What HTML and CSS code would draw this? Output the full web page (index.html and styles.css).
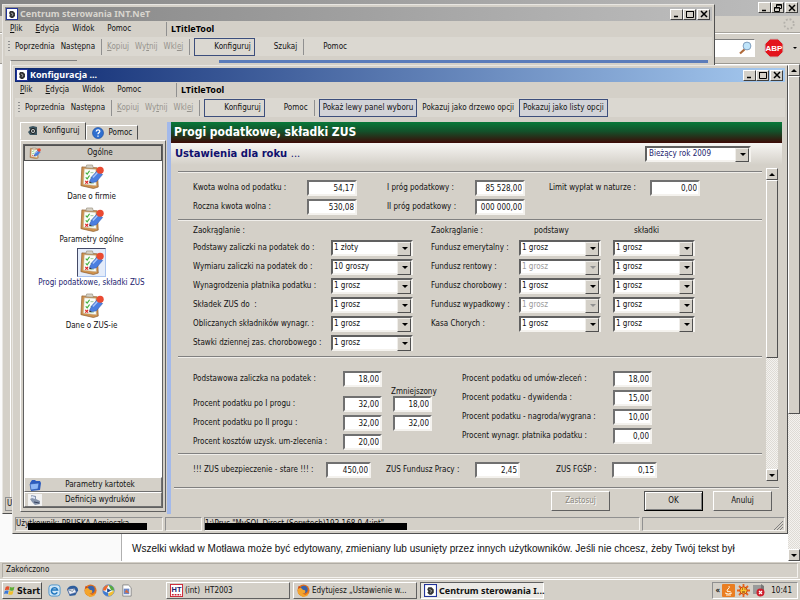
FILE: index.html
```
<!DOCTYPE html>
<html lang="pl">
<head>
    <meta charset="UTF-8">
    <meta name="viewport" content="width=device-width, initial-scale=1.0">
    <title>Konfiguracja ...</title>
    <link rel="stylesheet" href="styles.css">
</head>
<body>

<!-- Ikony -->
<svg class="sprite" width="0" height="0">
    <symbol id="ico-app" viewBox="0 0 12 12">
        <rect x=".5" y=".5" width="11" height="11" fill="#fff" stroke="#22339a"/>
        <path d="M4 3h3l2 2v3L7 10H5L3 8l1-1-1-2z" fill="#333"/>
        <path d="M5 5l2 1-1 2" stroke="#bbb" fill="none" stroke-width=".8"/>
    </symbol>
    <symbol id="ico-clip" viewBox="0 0 26 26">
        <path d="M3 3l16 1 1 20-5 1.500-13-3z" fill="#cf9350" stroke="#8a5a2a" stroke-width=".7"/>
        <path d="M5.500 5l12 .5.5 17L4.500 21z" fill="#fafdf8" stroke="#b9a98c" stroke-width=".5"/>
        <path d="M7 4l1-3h6l1 3.500z" fill="#d7d2c6" stroke="#8d8571" stroke-width=".6"/>
        <path d="M7 9l1.500 1.500L11 7M7 14l1.500 1.500L11 12" stroke="#3fae3a" fill="none" stroke-width="1.200"/>
        <path d="M6.500 17.500l3 3m0-3l-3 3" stroke="#d22" stroke-width="1.200"/>
        <path d="M12 9h3M12 14h2M11.500 20h4" stroke="#9bc79a"/>
        <path d="M11 18l2.500-5 6-6.500 5 4.500-6.500 7.500-5 1z" fill="#4b7fe0" stroke="#2c57b4" stroke-width=".6"/>
        <path d="M14.500 14l5.500-6" stroke="#a9c6fa" stroke-width="1.500"/>
        <circle cx="22" cy="6.500" r="3.700" fill="#ea4a32"/>
        <path d="M10.500 20l.5-2 2.500 1.500z" fill="#333"/>
    </symbol>
    <symbol id="ico-gear" viewBox="0 0 12 12">
        <path d="M2 2l4-1 4 1v8H3l-2-3 2-2z" fill="#3c5560"/>
        <circle cx="6" cy="6" r="2.500" fill="#cfd8da" stroke="#111"/>
        <circle cx="6" cy="6" r="1" fill="#222"/>
    </symbol>
    <symbol id="ico-help" viewBox="0 0 12 12">
        <circle cx="6" cy="6" r="5.500" fill="#2f6fd0" stroke="#174a9c" stroke-width=".6"/>
        <path d="M4.200 4.500C4.300 2.200 8 2.300 7.800 4.500 7.700 5.700 6 5.600 6 7.300M6 8.500v1.300" stroke="#fff" stroke-width="1.300" fill="none"/>
    </symbol>
    <symbol id="ico-folder" viewBox="0 0 14 12">
        <path d="M2 4l2-3h3l1 1h4l1 2-1 7-9 1z" fill="#2c5cc0"/>
        <path d="M2 5l9-1-1 6-7 1z" fill="#8db6f5" stroke="#2450aa" stroke-width=".6"/>
    </symbol>
    <symbol id="ico-print" viewBox="0 0 14 12">
        <rect width="14" height="12" fill="#f2f2f2"/>
        <path d="M3 1l5 1v3l4 2v3l-5 1-3-3-2-3 2-1z" fill="#8795ad"/>
        <path d="M4 2l3 1v2l-3-1z" fill="#dfe8fa"/>
        <path d="M6 8l5 1" stroke="#34405c"/>
    </symbol>
    <symbol id="ico-min" viewBox="0 0 8 8"><path d="M1 6.500h4" stroke="#000" stroke-width="1.500"/></symbol>
    <symbol id="ico-max" viewBox="0 0 8 8"><path d="M.5 1.500h7M.5 1v6.500h7V1" stroke="#000" fill="none"/></symbol>
    <symbol id="ico-restore" viewBox="0 0 8 8"><path d="M2.500 3V.5h5v4H6M.5 3.500h5v4h-5zM2 1.200h6M0 4h6" stroke="#000" fill="none"/></symbol>
    <symbol id="ico-close" viewBox="0 0 8 8"><path d="M1 1l6 6M7 1L1 7" stroke="#000" stroke-width="1.500"/></symbol>
    <symbol id="ico-firefox" viewBox="0 0 14 14">
        <circle cx="7" cy="7" r="6.500" fill="#e2701c"/>
        <circle cx="7.500" cy="6" r="4" fill="#3a62a8"/>
        <path d="M1 5c2-2 4-1 5 1 1 1 3 0 3 2s-3 3-5 1l5 3 4-3-2 4-5 1-5-4z" fill="#f4a52c"/>
        <path d="M1 5l1-3 2 2z" fill="#c8481a"/>
    </symbol>
</svg>

<!-- Okno przegladarki w tle -->
<div class="browser">
    <div class="browser-title">
        <div class="controls">
            <button type="button" aria-label="Minimalizuj"><svg><use href="#ico-min"/></svg></button>
            <button type="button" aria-label="Przywróć"><svg><use href="#ico-restore"/></svg></button>
            <button type="button" class="close" aria-label="Zamknij"><svg><use href="#ico-close"/></svg></button>
        </div>
    </div>
    <div class="browser-menu">
        <svg class="throbber" viewBox="0 0 12 12"><circle cx="6" cy="6" r="4.800" fill="none" stroke="#b4b1ab" stroke-width="1.800" stroke-dasharray="1.900 1.870"/></svg>
    </div>
    <div class="browser-nav">
        <div class="search">
            <input type="text" aria-label="Szukaj w sieci">
            <svg class="lens" viewBox="0 0 14 14"><path d="M2 12.500L7 8" stroke="#b06a3a" stroke-width="2.200"/><circle cx="9" cy="5" r="3.900" fill="#bfe4fa" stroke="#7e9dbd"/></svg>
        </div>
        <svg class="abp" viewBox="0 0 20 20"><path d="M6 1h8l5 5v8l-5 5H6l-5-5V6z" fill="#e3141c" stroke="#c9b8b4"/><text x="10" y="13" text-anchor="middle">ABP</text></svg>
        <svg class="dot" viewBox="0 0 4 4"><path d="M0 1h4L2 3z"/></svg>
    </div>
    <div class="browser-page">
        <div class="page-side"></div>
        <div class="page-text">
            <p>Wszelki wkład w Motława może być edytowany, zmieniany lub usunięty przez innych użytkowników. Jeśli nie chcesz, żeby Twój tekst był</p>
        </div>
        <div class="scrollbar page-scroll">
            <span class="arrow up"></span>
            <span class="thumb"></span>
            <span class="arrow down"></span>
        </div>
    </div>
    <div class="browser-status"><span>Zakończono</span></div>
</div>

<!-- Centrum sterowania -->
<div class="window window-back">
    <div class="titlebar inactive">
        <svg class="app-icon"><use href="#ico-app"/></svg>
        <span class="caption">Centrum sterowania INT.NeT</span>
        <div class="controls">
            <button type="button" aria-label="Minimalizuj"><svg><use href="#ico-min"/></svg></button>
            <button type="button" aria-label="Maksymalizuj"><svg><use href="#ico-max"/></svg></button>
            <button type="button" class="close" aria-label="Zamknij"><svg><use href="#ico-close"/></svg></button>
        </div>
    </div>
    <div class="menubar">
        <nav>
            <button type="button"><u>P</u>lik</button>
            <button type="button"><u>E</u>dycja</button>
            <button type="button">Widok</button>
            <button type="button">Pomoc</button>
        </nav>
        <b>LTitleTool</b>
    </div>
    <div class="toolbar">
        <i class="grip"></i>
        <button type="button">Poprzednia</button>
        <button type="button">Następna</button>
        <i class="sep"></i>
        <button type="button" disabled><u>K</u>opiuj</button>
        <button type="button" disabled>Wy<u>t</u>nij</button>
        <button type="button" disabled>Wkl<u>e</u>j</button>
        <i class="sep"></i>
        <button type="button" class="boxed icon-space">Konfiguruj</button>
        <button type="button" class="icon-gap">Szukaj</button>
        <i class="sep"></i>
        <button type="button" class="icon-gap">Pomoc</button>
    </div>
    <div class="back-body">
        <div class="back-left"></div>
        <div class="back-right"></div>
    </div>
    <div class="back-status">Użytkownik</div>
</div>

<!-- Konfiguracja -->
<div class="window window-config">
    <div class="titlebar">
        <svg class="app-icon"><use href="#ico-app"/></svg>
        <span class="caption">Konfiguracja ...</span>
        <div class="controls">
            <button type="button" aria-label="Minimalizuj"><svg><use href="#ico-min"/></svg></button>
            <button type="button" aria-label="Maksymalizuj"><svg><use href="#ico-max"/></svg></button>
            <button type="button" class="close" aria-label="Zamknij"><svg><use href="#ico-close"/></svg></button>
        </div>
    </div>
    <div class="menubar">
        <nav>
            <button type="button"><u>P</u>lik</button>
            <button type="button"><u>E</u>dycja</button>
            <button type="button">Widok</button>
            <button type="button">Pomoc</button>
        </nav>
        <b>LTitleTool</b>
    </div>
    <div class="toolbar">
        <i class="grip"></i>
        <button type="button">Poprzednia</button>
        <button type="button">Następna</button>
        <i class="sep"></i>
        <button type="button" disabled><u>K</u>opiuj</button>
        <button type="button" disabled>Wy<u>t</u>nij</button>
        <button type="button" disabled>Wkl<u>e</u>j</button>
        <i class="sep"></i>
        <button type="button" class="boxed icon-space">Konfiguruj</button>
        <button type="button" class="icon-gap">Pomoc</button>
        <i class="sep"></i>
        <button type="button" class="boxed">Pokaż lewy panel wyboru</button>
        <button type="button">Pokazuj jako drzewo opcji</button>
        <button type="button" class="boxed">Pokazuj jako listy opcji</button>
    </div>

    <div class="config-body">
        <aside class="side">
            <div class="tabs">
                <button type="button" class="tab active"><svg><use href="#ico-gear"/></svg>Konfiguruj</button>
                <button type="button" class="tab"><svg><use href="#ico-help"/></svg>Pomoc</button>
            </div>
            <div class="tab-page">
                <div class="outlook">
                    <button type="button" class="group first"><svg><use href="#ico-clip"/></svg><span>Ogólne</span></button>
                    <div class="items">
                        <button type="button" class="item"><svg><use href="#ico-clip"/></svg><span>Dane o firmie</span></button>
                        <button type="button" class="item"><svg><use href="#ico-clip"/></svg><span>Parametry ogólne</span></button>
                        <button type="button" class="item selected"><svg><use href="#ico-clip"/></svg><span>Progi podatkowe, składki ZUS</span></button>
                        <button type="button" class="item"><svg><use href="#ico-clip"/></svg><span>Dane o ZUS-ie</span></button>
                    </div>
                    <button type="button" class="group"><svg><use href="#ico-folder"/></svg><span>Parametry kartotek</span></button>
                    <button type="button" class="group"><svg><use href="#ico-print"/></svg><span>Definicja wydruków</span></button>
                </div>
            </div>
        </aside>
        <div class="splitter"></div>

        <main class="content">
            <h1>Progi podatkowe, składki ZUS</h1>
            <div class="year-bar">
                <h2>Ustawienia dla roku <span>...</span></h2>
                <div class="combo year"><select aria-label="Rok"><option>Bieżący rok 2009</option></select></div>
            </div>

            <div class="scroll-area">
                <form class="settings">
                    <section class="limits">
                        <label for="kwota">Kwota wolna od podatku :</label><input type="text" id="kwota" value="54,17">
                        <label for="prog1" class="second">I próg podatkowy :</label><input type="text" id="prog1" value="85 528,00">
                        <label for="limit" class="third">Limit wypłat w naturze :</label><input type="text" id="limit" value="0,00">
                        <label for="roczna">Roczna kwota wolna :</label><input type="text" id="roczna" value="530,08">
                        <label for="prog2" class="second">II próg podatkowy :</label><input type="text" id="prog2" value="000 000,00">
                    </section>

                    <section class="rounding">
                        <div class="round-left">
                            <span class="head">Zaokrąglanie :</span><span></span>
                            <label for="r1">Podstawy zaliczki na podatek do :</label>
                            <div class="combo"><select id="r1"><option>1 złoty</option></select></div>
                            <label for="r2">Wymiaru zaliczki na podatek do :</label>
                            <div class="combo"><select id="r2"><option>10 groszy</option></select></div>
                            <label for="r3">Wynagrodzenia płatnika podatku :</label>
                            <div class="combo"><select id="r3"><option>1 grosz</option></select></div>
                            <label for="r4">Składek ZUS do &nbsp;:</label>
                            <div class="combo"><select id="r4"><option>1 grosz</option></select></div>
                            <label for="r5">Obliczanych składników wynagr. :</label>
                            <div class="combo"><select id="r5"><option>1 grosz</option></select></div>
                            <label for="r6">Stawki dziennej zas. chorobowego :</label>
                            <div class="combo"><select id="r6"><option>1 grosz</option></select></div>
                        </div>
                        <div class="round-right">
                            <span class="head">Zaokrąglanie :</span><span class="head basis">podstawy</span><span class="head premium">składki</span>
                            <label for="f1">Fundusz emerytalny :</label>
                            <div class="combo"><select id="f1"><option>1 grosz</option></select></div>
                            <div class="combo"><select aria-label="Fundusz emerytalny, składki"><option>1 grosz</option></select></div>
                            <label for="f2">Fundusz rentowy :</label>
                            <div class="combo off"><select id="f2" disabled><option>1 grosz</option></select></div>
                            <div class="combo"><select aria-label="Fundusz rentowy, składki"><option>1 grosz</option></select></div>
                            <label for="f3">Fundusz chorobowy :</label>
                            <div class="combo"><select id="f3"><option>1 grosz</option></select></div>
                            <div class="combo"><select aria-label="Fundusz chorobowy, składki"><option>1 grosz</option></select></div>
                            <label for="f4">Fundusz wypadkowy :</label>
                            <div class="combo off"><select id="f4" disabled><option>1 grosz</option></select></div>
                            <div class="combo"><select aria-label="Fundusz wypadkowy, składki"><option>1 grosz</option></select></div>
                            <label for="f5">Kasa Chorych :</label>
                            <div class="combo"><select id="f5"><option>1 grosz</option></select></div>
                            <div class="combo"><select aria-label="Kasa Chorych, składki"><option>1 grosz</option></select></div>
                        </div>
                    </section>

                    <section class="percents">
                        <div class="percent-left">
                            <label for="p1">Podstawowa zaliczka na podatek :</label><input type="text" id="p1" value="18,00"><span></span>
                            <span class="reduced">Zmniejszony</span>
                            <label for="p2">Procent podatku po I progu :</label><input type="text" id="p2" value="32,00"><input type="text" aria-label="Zmniejszony, I próg" value="18,00">
                            <label for="p3">Procent podatku po II progu :</label><input type="text" id="p3" value="32,00"><input type="text" aria-label="Zmniejszony, II próg" value="32,00">
                            <label for="p4">Procent kosztów uzysk. um-zlecenia :</label><input type="text" id="p4" value="20,00">
                        </div>
                        <div class="percent-right">
                            <label for="q1">Procent podatku od umów-zleceń :</label><input type="text" id="q1" value="18,00">
                            <label for="q2">Procent podatku - dywidenda :</label><input type="text" id="q2" value="15,00">
                            <label for="q3">Procent podatku - nagroda/wygrana :</label><input type="text" id="q3" value="10,00">
                            <label for="q4">Procent wynagr. płatnika podatku :</label><input type="text" id="q4" value="0,00">
                        </div>
                    </section>

                    <section class="zus">
                        <label for="z1">!!! ZUS ubezpieczenie - stare !!! :</label><input type="text" id="z1" value="450,00">
                        <label for="z2" class="second">ZUS Fundusz Pracy :</label><input type="text" id="z2" value="2,45">
                        <label for="z3" class="third">ZUS FGŚP :</label><input type="text" id="z3" value="0,15">
                    </section>
                </form>
                <div class="scrollbar form-scroll">
                    <span class="arrow up"></span>
                    <span class="thumb"></span>
                    <span class="arrow down"></span>
                </div>
            </div>

            <div class="actions">
                <button type="button" class="btn apply" disabled>Zastosuj</button>
                <button type="button" class="btn ok">OK</button>
                <button type="button" class="btn">Anuluj</button>
            </div>
        </main>
    </div>

    <div class="statusbar">
        <div class="cell user">Użytkownik: PRUSKA Agnieszka<i class="mask"></i></div>
        <div class="cell empty"></div>
        <div class="cell base">1:\Prus "MySQL Direct (Serwtech)192.168.0.4:int"<i class="mask"></i></div>
        <div class="cell last"><svg class="resize" viewBox="0 0 10 10"><path d="M1 10l9-9M4 10l6-6M7 10l3-3" stroke="#808080"/></svg></div>
    </div>
</div>

<!-- Pasek zadan -->
<div class="taskbar">
    <button type="button" class="start">
        <svg viewBox="0 0 14 12"><path d="M2 2q2-1.500 4.500-.3L5.500 5.500Q3 4.500 1 5.700z" fill="#e2502c"/><path d="M7.200 2q2.500 1 5-.4l-1 4q-2.500 1.200-5 .2z" fill="#5fae36"/><path d="M1 6.500q2-1 4.400-.2L4.400 10Q2 9 0 10.200z" fill="#3a78d8"/><path d="M6 6.600q2.500 1 5-.2l-1 4q-2.500 1.200-5 0z" fill="#f2c02c"/></svg>
        Start
    </button>
    <div class="quick">
        <svg viewBox="0 0 14 14"><rect x="1" y="1" width="12" height="12" rx="3" fill="#cfe6f6" stroke="#4b93cb"/><path d="M10 9a3.400 3.400 0 1 1 .3-2.500H4" stroke="#2378be" stroke-width="1.600" fill="none"/></svg>
        <svg viewBox="0 0 14 14"><path d="M1 6q2-5 8-4 4 1 4 5l-3 5-6 1z" fill="#2d5d9d"/><path d="M2 6l7-1 2 4-7 2z" fill="#edf2fa" stroke="#88a" stroke-width=".5"/><path d="M2 6l5 2 2-3" fill="none" stroke="#789"/></svg>
        <svg><use href="#ico-firefox"/></svg>
        <svg viewBox="0 0 14 14"><circle cx="7" cy="7" r="6" fill="#f4f7fb" stroke="#456fb4"/><path d="M7 1a6 6 0 0 0-6 6h3z" fill="#ef6b2c"/><path d="M7 1a6 6 0 0 1 6 6h-3z" fill="#58aa3d"/><path d="M1 7a6 6 0 0 0 6 6V10z" fill="#3e7bd2"/><path d="M13 7a6 6 0 0 1-6 6V10z" fill="#f3be31"/><path d="M5.500 4.500v5L10 7z" fill="#224a8c"/></svg>
        <svg viewBox="0 0 14 14"><path d="M3 1h6l3 3v9H3z" fill="#fff" stroke="#888"/><rect x="4" y="5" width="6" height="6" fill="#6b87c8"/><path d="M5 9l2-3 3 4z" fill="#d86a3a"/></svg>
    </div>
    <div class="tasks">
        <button type="button">
            <svg viewBox="0 0 14 14"><rect x=".5" y=".5" width="13" height="13" fill="#fff" stroke="#c23"/><text class="ht" x="7" y="9" text-anchor="middle">HT</text><path d="M2 11.500h10" stroke="#c23" stroke-width="1.500" stroke-dasharray="2 1"/></svg>
            <span>(int) &nbsp;HT2003</span>
        </button>
        <button type="button"><svg><use href="#ico-firefox"/></svg><span>Edytujesz „Ustawienie w...</span></button>
        <button type="button" class="pressed"><svg><use href="#ico-app"/></svg><span>Centrum sterowania I...</span></button>
    </div>
    <div class="tray">
        <b>«</b>
        <svg viewBox="0 0 13 13"><rect width="13" height="13" rx="1" fill="#ea7e22"/><path d="M3 9q3 2 7 0M4 11h5M6 8q-2-2 0-3t1-3M5 7l4 1" stroke="#fff3dd" fill="none"/></svg>
        <svg viewBox="0 0 13 13"><path d="M6.500 0v13M0 6.500h13M2 2l9 9M11 2l-9 9" stroke="#e8641a" stroke-width="1.800"/><circle cx="6.500" cy="6.500" r="3.700" fill="#f9c630" stroke="#c8401a"/><path d="M5 5h1M7.500 5h1M5 8h3" stroke="#7b2410"/></svg>
        <svg viewBox="0 0 13 13"><path d="M1 1h8v9H1z" fill="#9a9a9a"/><path d="M9 0l3 2v8l-3 1z" fill="#777"/><circle cx="8.500" cy="8.500" r="4" fill="#cf1f2c"/><path d="M7 7l3 3m0-3l-3 3" stroke="#fff" stroke-width="1.200"/></svg>
        <span>10:41</span>
    </div>
</div>

</body>
</html>
```
FILE: styles.css
```
* {
    box-sizing: border-box;
}
body {
    margin: 0;
    height: 100vh;
    overflow: hidden;
    position: relative;
    display: flex;
    flex-direction: column;
    font-family: "DejaVu Sans Condensed", "DejaVu Sans", sans-serif;
    font-size: 8px;
    line-height: 12px;
    background: #d4d0c8;
    color: #111;
}
button, input, select {
    font: inherit;
    color: inherit;
    margin: 0;
    padding: 0;
}
button {
    background: none;
    border: 0;
    white-space: nowrap;
}
h1, h2, p {
    margin: 0;
}
svg {
    display: block;
    flex: none;
}
.sprite {
    position: absolute;
}

/* Przyciski okna */
.controls {
    display: flex;
    margin-left: auto;
}
.controls button {
    width: 13px;
    height: 11px;
    display: flex;
    align-items: center;
    justify-content: center;
    background: #d4d0c8;
    border: 1px solid;
    border-color: #fff #404040 #404040 #fff;
}
.controls .close {
    margin-left: 1px;
}
.controls svg {
    width: 8px;
    height: 8px;
}

/* Przegladarka */
.browser {
    flex: 1;
    min-height: 0;
    display: flex;
    flex-direction: column;
}
.browser-title {
    height: 16px;
    padding: 2px 2px 0 0;
    display: flex;
    background: linear-gradient(90deg, #858585, #bdbdbd);
}
.browser-menu {
    height: 17px;
    display: flex;
    justify-content: flex-end;
    align-items: center;
    padding-right: 5px;
    border-bottom: 1px solid #a5a29b;
}
.throbber {
    width: 12px;
    height: 12px;
}
.browser-nav {
    height: 31px;
    display: flex;
    align-items: center;
    justify-content: flex-end;
    gap: 9px;
    padding: 0 3px 1px 0;
    border-top: 1px solid #fff;
    border-bottom: 1px solid #9c9992;
}
.search {
    width: 200px;
    height: 18px;
    display: flex;
    align-items: center;
    padding-right: 2px;
    background: #fff;
    border: 1px solid #808080;
    border-color: #808080 #fff #fff #808080;
}
.search input {
    flex: 1;
    min-width: 0;
    border: 0;
    background: none;
}
.lens {
    width: 14px;
    height: 14px;
}
.abp {
    width: 20px;
    height: 20px;
    font: bold 8px "Liberation Sans", sans-serif;
    fill: #fff;
}
.dot {
    width: 4px;
    height: 4px;
}
.browser-page {
    flex: 1;
    min-height: 0;
    display: flex;
    background: #fff;
}
.page-side {
    width: 122px;
    background: #fafafa;
    border-right: 1px solid #b0b0b0;
}
.page-text {
    flex: 1;
    display: flex;
    align-items: flex-end;
    padding: 0 20px 4px 10px;
    font: 10px/16px "Liberation Sans", Arial, sans-serif;
}
.browser-status {
    height: 18px;
    padding: 1px 2px;
    background: #d4d0c8;
    border-top: 1px solid #fff;
}
.browser-status span {
    display: block;
    padding: 0 3px 1px;
    border: 1px solid;
    border-color: #b0aca4 #f4f2ee #f4f2ee #b0aca4;
}

/* Paski przewijania */
.scrollbar {
    width: 12px;
    display: flex;
    flex-direction: column;
    background: repeating-conic-gradient(#f4f2ef 0 25%, #dedbd5 0 50%) 0 0 / 2px 2px;
}
.scrollbar .arrow {
    height: 12px;
    display: flex;
    align-items: center;
    justify-content: center;
    background: #d4d0c8;
    border: 1px solid;
    border-color: #fff #505050 #505050 #fff;
}
.arrow::after {
    content: "";
    border: 3px solid transparent;
}
.arrow.up::after {
    border-bottom-color: #000;
    border-top: 0;
}
.arrow.down::after {
    border-top-color: #000;
    border-bottom: 0;
}
.arrow.down {
    margin-top: auto;
}
.thumb {
    background: #d4d0c8;
    border: 1px solid;
    border-color: #fff #505050 #505050 #fff;
}
.page-scroll .thumb {
    height: 68%;
}
.form-scroll .thumb {
    height: 57%;
}

/* Okna */
.window {
    position: absolute;
    display: flex;
    flex-direction: column;
    padding: 2px;
    background: #d4d0c8;
    border: 1px solid;
    border-color: #e8e6e2 #505050 #505050 #e8e6e2;
}
.window-back {
    left: 2px;
    right: 85px;
    top: 4px;
    bottom: 86px;
}
.window-config {
    left: 12px;
    right: 12px;
    top: 65px;
    bottom: 66px;
}
.titlebar {
    height: 14px;
    display: flex;
    align-items: center;
    gap: 2px;
    padding: 0 2px 0 1px;
    background: linear-gradient(90deg, #0e2a72, #a6caf0);
    color: #fff;
    font: bold 9px/12px "Noto Sans", sans-serif;
}
.titlebar.inactive {
    background: linear-gradient(90deg, #858585, #bcbcbc);
    color: #d8d5ce;
}
.app-icon {
    width: 12px;
    height: 12px;
}
.menubar {
    height: 16px;
    display: flex;
    align-items: center;
}
.menubar nav {
    width: 162px;
    height: 14px;
    display: flex;
    align-items: center;
    gap: 13px;
    padding-left: 5px;
    border-right: 1px solid #909090;
}
.menubar b {
    padding-left: 4px;
    color: #000;
    font: bold 9px/12px "Noto Sans", sans-serif;
}
.toolbar {
    height: 19px;
    display: flex;
    align-items: center;
    gap: 4px;
    padding-left: 3px;
    background: #dbd8d1;
}
.toolbar button {
    padding: 0 1px;
}
.toolbar button:disabled {
    color: #96938d;
}
.grip {
    width: 2px;
    height: 12px;
    background: repeating-linear-gradient(#909090 0 1px, #dbd8d1 1px 3px);
}
.sep {
    width: 1px;
    height: 16px;
    margin-left: 1px;
    background: #909090;
}
.toolbar .boxed {
    height: 18px;
    padding: 0 3px;
    background: #d2d3d8;
    border: 1px solid #3c4e7c;
}
.toolbar .icon-space {
    padding-left: 19px;
    background: #dbd8d1;
}
.toolbar .icon-gap {
    padding-left: 15px;
}

.back-body {
    flex: 1;
    display: flex;
    gap: 142px;
    padding: 4px 4px 0 5px;
}
.back-left {
    width: 67px;
    border-top: 1px solid #808080;
    border-left: 1px solid #fff;
}
.back-right {
    flex: 1;
    border-top: 3px solid #5b7cba;
}
.back-status {
    border: 1px solid #909090;
    width: 120px;
    padding-left: 1px;
}

/* Tresc okna konfiguracji */
.config-body {
    flex: 1;
    min-height: 0;
    display: flex;
    padding: 5px 3px 3px 5px;
}
.side {
    width: 146px;
    display: flex;
    flex-direction: column;
    padding-bottom: 2px;
}
.tabs {
    display: flex;
    align-items: flex-end;
    height: 18px;
}
.tab {
    height: 15px;
    display: flex;
    align-items: center;
    gap: 4px;
    padding: 0 5px;
    border: 1px solid;
    border-color: #fff #505050 transparent #fff;
}
.tab.active {
    height: 18px;
    padding: 0 6px;
}
.tab svg {
    width: 12px;
    height: 12px;
}
.tab-page {
    flex: 1;
    display: flex;
    padding: 3px 2px;
    border: 1px solid;
    border-color: #fff #606060 #606060 #fff;
}
.outlook {
    flex: 1;
    display: flex;
    flex-direction: column;
    background: #fff;
    border: 1px solid #606060;
}
.group {
    height: 15px;
    display: flex;
    align-items: center;
    padding: 0 3px;
    background: #d4d0c8;
    border: 1px solid;
    border-color: #fff #707070 #707070 #fff;
}
.group.first {
    height: 16px;
    background: #ccc8c0;
    border-color: #505050;
}
.group svg {
    width: 14px;
    height: 12px;
}
.group span {
    flex: 1;
}
.items {
    flex: 1;
    display: flex;
    flex-direction: column;
    align-items: center;
    padding: 1px 3px 0 0;
}
.item {
    height: 43px;
    display: flex;
    flex-direction: column;
    align-items: center;
}
.item svg {
    width: 29px;
    height: 29px;
    padding: 1px;
    border: 1px solid transparent;
}
.item.selected {
    color: #23236e;
}
.item.selected svg {
    border-color: #444a66 #a9c4f0 #a9c4f0 #444a66;
    background: #e4ecfa;
}
.splitter {
    width: 4px;
    margin-left: 1px;
    background: #a3b9ea;
}
.content {
    flex: 1;
    min-width: 0;
    display: flex;
    flex-direction: column;
}
.content h1 {
    height: 21px;
    padding-left: 3px;
    background: linear-gradient(#08793a, #14502a 45%, #3c0a06);
    color: #fff;
    font: bold 12px/20px "DejaVu Sans Condensed", "DejaVu Sans", sans-serif;
}
.year-bar {
    height: 22px;
    display: flex;
    align-items: center;
    justify-content: space-between;
    padding: 0 31px 0 4px;
    background: linear-gradient(#f6f5f3, #d4d0c8);
}
.year-bar h2 {
    color: #10106e;
    font: bold 10px/20px "DejaVu Sans", sans-serif;
}
.year-bar h2 span {
    font-weight: normal;
}

/* Listy rozwijane i pola */
.combo {
    position: relative;
    height: 16px;
}
.combo select {
    width: 100%;
    height: 16px;
    appearance: none;
    padding: 0 14px 0 1px;
    border: 2px solid;
    border-color: #606060 #f4f2ee #f4f2ee #606060;
    border-radius: 0;
    background: #fff;
    opacity: 1;
}
.combo::before {
    content: "";
    position: absolute;
    right: 2px;
    top: 2px;
    width: 12px;
    height: 12px;
    background: #d4d0c8;
    border: 1px solid;
    border-color: #f0eeea #505050 #505050 #f0eeea;
    pointer-events: none;
}
.combo::after {
    content: "";
    position: absolute;
    right: 5px;
    top: 7px;
    border: 3px solid transparent;
    border-top-color: #000;
    border-bottom: 0;
    pointer-events: none;
}
.combo.off select {
    color: #9a9a9a;
}
.combo.off::after {
    border-top-color: #909090;
}
.combo.year {
    width: 106px;
    color: #23236e;
}
.combo.year select {
    padding-left: 2px;
}
.settings input {
    width: 100%;
    min-width: 0;
    height: 16px;
    padding: 0 1px;
    border: 2px solid;
    border-color: #707070 #f4f2ee #f4f2ee #707070;
    background: #fff;
    text-align: right;
}
.settings label, .head {
    white-space: nowrap;
}

/* Formularz */
.scroll-area {
    flex: 1;
    min-height: 0;
    display: flex;
    justify-content: space-between;
    padding: 3px 4px 6px 7px;
}
.settings {
    flex: 1;
    margin-right: 4px;
    padding-top: 3px;
}
.settings section {
    padding-left: 15px;
    border-top: 1px solid #808080;
    box-shadow: inset 0 1px #f0eeea;
    display: grid;
    align-items: center;
}
.settings .limits {
    grid-template-columns: 114px 50px 118px 50px 125px 50px;
    row-gap: 3px;
    padding-top: 8px;
    padding-bottom: 4px;
}
.limits .second {
    padding-left: 30px;
}
.limits .third {
    padding-left: 24px;
}
.settings .rounding {
    display: flex;
    align-items: flex-start;
    gap: 18px;
    padding-top: 5px;
    padding-bottom: 5px;
}
.round-left, .round-right {
    display: grid;
    align-items: center;
    row-gap: 3px;
}
.round-left {
    grid-template-columns: 138px 82px;
}
.round-right {
    grid-template-columns: 88px 82px 94px;
}
.round-right .combo:nth-child(3n) {
    margin-left: 12px;
}
.basis {
    padding-left: 15px;
}
.premium {
    padding-left: 33px;
}
.settings .percents {
    display: flex;
    align-items: flex-start;
    gap: 30px;
    padding-top: 14px;
    padding-bottom: 3px;
}
.percent-left {
    display: grid;
    grid-template-columns: 139px 39px 39px;
    column-gap: 11px;
    row-gap: 3px;
    align-items: center;
}
.percent-right {
    display: grid;
    grid-template-columns: 151px 39px;
    row-gap: 3px;
    align-items: center;
}
.reduced {
    grid-column: 1 / -1;
    height: 3px;
    line-height: 3px;
    padding-left: 198px;
}
.settings .zus {
    grid-template-columns: 133px 45px 104px 45px 92px 45px;
    padding-top: 8px;
}
.zus .second {
    padding-left: 15px;
}
.zus .third {
    padding-left: 36px;
}
.actions {
    height: 27px;
    display: flex;
    justify-content: flex-end;
    align-items: center;
    margin: 0 3px;
    padding-right: 7px;
    border-top: 1px solid #808080;
    box-shadow: inset 0 1px #f0eeea;
}
.btn {
    width: 59px;
    height: 20px;
    margin-left: 10px;
    border: 1px solid;
    border-color: #fff #606060 #606060 #fff;
}
.btn.ok {
    border-color: #555 #000 #000 #555;
    box-shadow: inset 1px 1px #fff, inset -1px -1px #808080;
}
.btn.apply {
    margin-right: 24px;
    color: #8c8880;
    text-shadow: 1px 1px #fff;
}

/* Pasek stanu */
.statusbar {
    height: 14px;
    display: flex;
    gap: 2px;
}
.cell {
    position: relative;
    height: 14px;
    white-space: nowrap;
    border: 1px solid;
    border-color: #909090 #f4f2ee #f4f2ee #909090;
}
.cell.user {
    width: 148px;
}
.cell.empty {
    width: 37px;
}
.cell.base {
    flex: 1;
}
.cell.last {
    width: 143px;
}
.mask {
    position: absolute;
    left: 12px;
    top: 5px;
    width: 119px;
    height: 7px;
    background: #000;
}
.base .mask {
    left: 0;
    width: 202px;
}
.resize {
    width: 10px;
    height: 10px;
    margin: 2px 1px 0 auto;
}

/* Pasek zadan */
.taskbar {
    height: 21px;
    display: flex;
    align-items: center;
    padding: 1px 2px 0;
    background: #d4d0c8;
    border-top: 1px solid #fff;
}
.start {
    width: 40px;
    height: 17px;
    display: flex;
    align-items: center;
    gap: 1px;
    padding: 0 0 0 1px;
    border: 1px solid;
    border-color: #fff #505050 #505050 #fff;
    font-weight: bold;
    font-size: 9px;
}
.start svg {
    width: 12px;
    height: 11px;
}
.quick {
    display: flex;
    gap: 5px;
    padding-left: 6px;
    width: 124px;
}
.quick svg {
    width: 13px;
    height: 13px;
}
.tasks {
    display: flex;
    flex: 1;
    gap: 3px;
}
.tasks button {
    width: 124px;
    height: 17px;
    display: flex;
    align-items: center;
    gap: 2px;
    padding: 0 3px;
    border: 1px solid;
    border-color: #fff #606060 #606060 #fff;
}
.tasks svg {
    width: 13px;
    height: 13px;
}
.tasks .pressed {
    border-color: #606060 #fff #fff #606060;
    background: #ebe9e5;
    font: bold 9px/12px "Noto Sans", sans-serif;
}
.ht {
    font: bold 8px "Liberation Sans", sans-serif;
    fill: #22226e;
}
.tray {
    height: 17px;
    display: flex;
    align-items: center;
    gap: 2px;
    padding: 0 5px 0 3px;
    border: 1px solid;
    border-color: #909090 #fff #fff #909090;
}
.tray svg {
    width: 13px;
    height: 13px;
}
.tray span {
    padding-left: 4px;
}
```
